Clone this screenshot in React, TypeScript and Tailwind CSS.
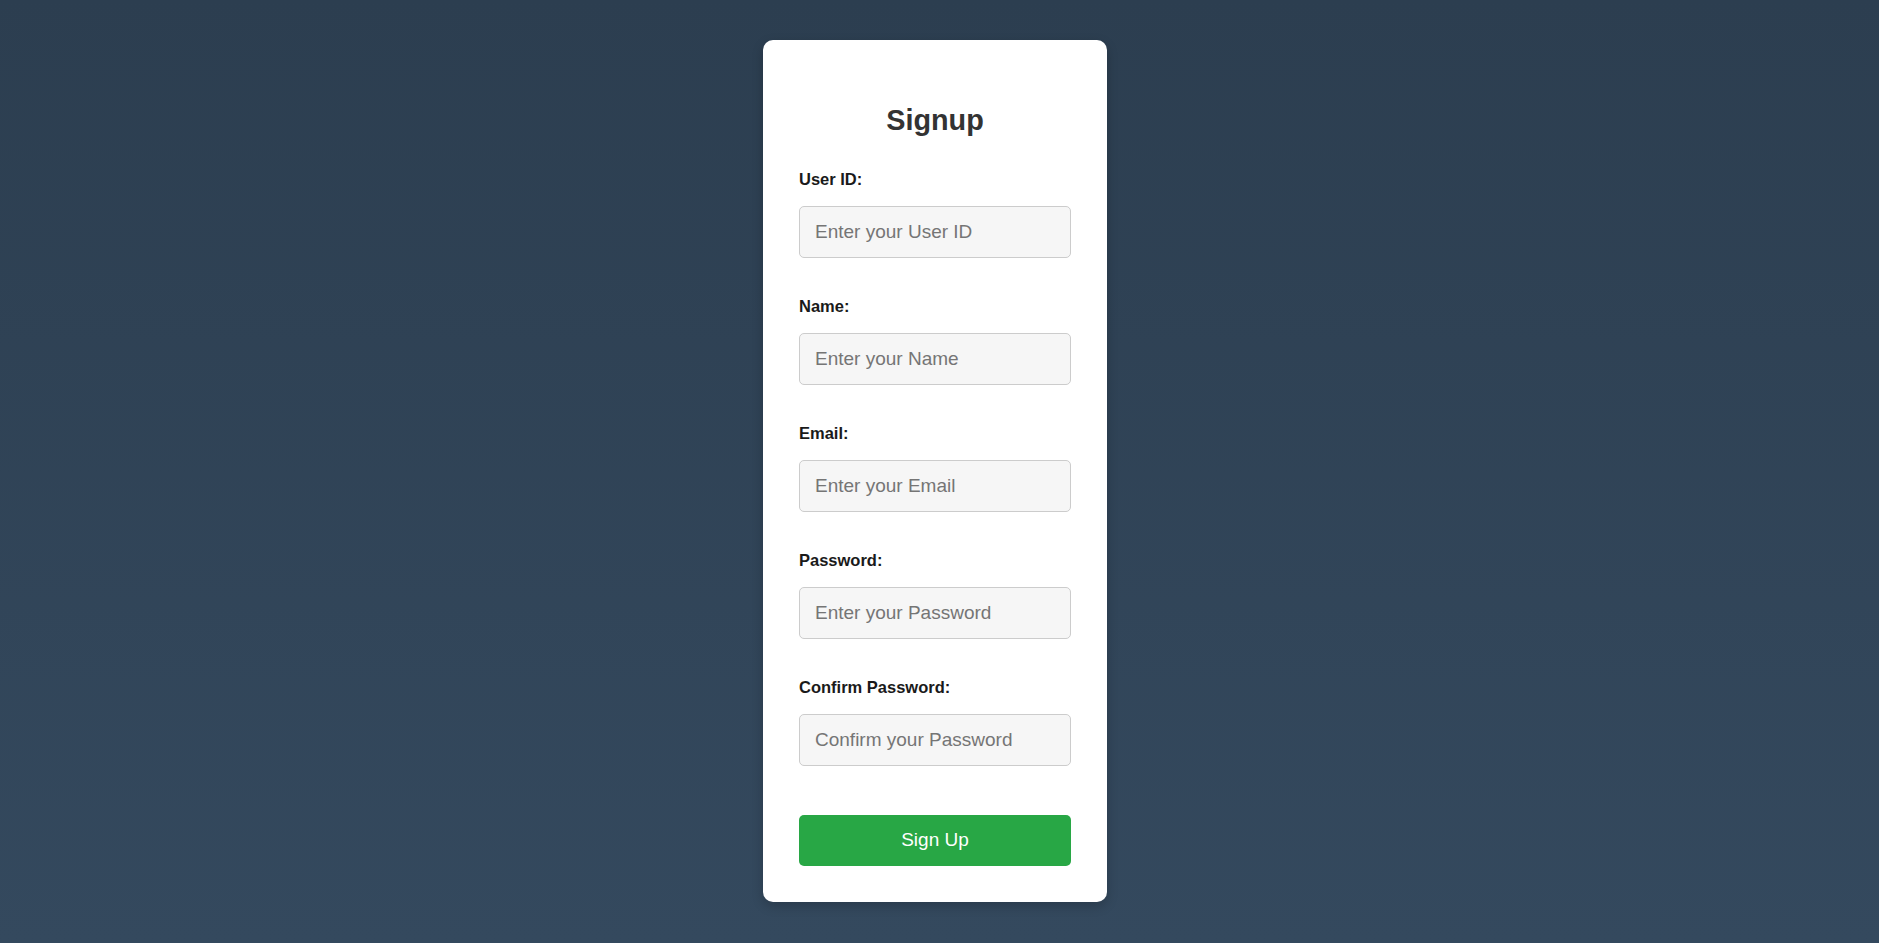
export default function App() {
  const fields = [
    { label: "User ID:", placeholder: "Enter your User ID", type: "text" },
    { label: "Name:", placeholder: "Enter your Name", type: "text" },
    { label: "Email:", placeholder: "Enter your Email", type: "email" },
    { label: "Password:", placeholder: "Enter your Password", type: "password" },
    { label: "Confirm Password:", placeholder: "Confirm your Password", type: "password" },
  ];

  return (
    <div className="min-h-screen flex items-center justify-center pr-[9px] bg-gradient-to-b from-[#2c3e50] to-[#34495e] font-['Liberation_Sans',Arial,sans-serif]">
      <div className="w-[344px] bg-white rounded-[10px] shadow-[0_4px_12px_rgba(0,0,0,0.2)] px-9 pt-[64px] pb-9 -mt-[2px]">
        <h2 className="text-center text-[28.8px] leading-[33px] font-bold text-[#333] mb-[33px]">Signup</h2>

        {fields.map((f) => (
          <div key={f.label} className="mb-[39px]">
            <label className="block text-[16.5px] leading-[18px] font-bold text-[#1a1a1a] mb-[18px]">{f.label}</label>
            <input
              type={f.type}
              placeholder={f.placeholder}
              className="block w-full h-[52px] px-[15px] text-[19px] bg-[#f6f6f6] border border-[#ccc] rounded-[5px] placeholder:text-[#757575] outline-none"
            />
          </div>
        ))}

        <button className="mt-[10px] w-full h-[51px] rounded-[5px] bg-[#28a745] text-white text-[19px]">Sign Up</button>
      </div>
    </div>
  );
}
